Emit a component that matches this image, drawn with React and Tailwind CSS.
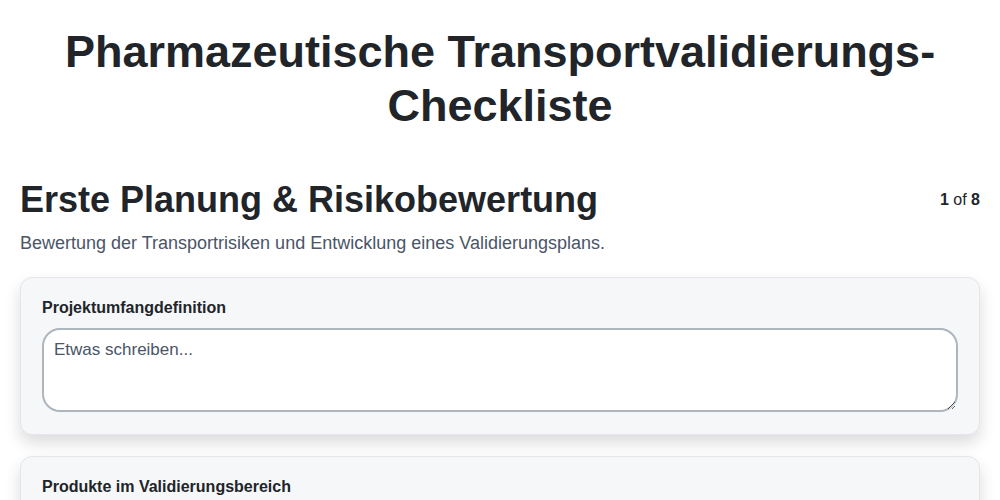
const FIELDS = [
  { label: 'Projektumfangdefinition' },
  { label: 'Produkte im Validierungsbereich' },
];

export default function App() {
  return (
    <div className="min-h-screen bg-white px-5 text-[#212529]" style={{ fontFamily: "'Liberation Sans', Arial, sans-serif" }}>
      <h1 className="mx-auto max-w-[900px] pt-[25px] text-center text-[45px] font-bold leading-[54px]">
        Pharmazeutische Transportvalidierungs-Checkliste
      </h1>

      <div className="mt-[45px] flex items-start justify-between">
        <h2 className="text-[36px] font-bold leading-[44px]">Erste Planung &amp; Risikobewertung</h2>
        <p className="mt-[10px] text-[16px]">
          <span className="font-bold">1</span> of <span className="font-bold">8</span>
        </p>
      </div>
      <p className="mt-[9px] text-[18px] leading-[24px] text-[#4a5568]">
        Bewertung der Transportrisiken und Entwicklung eines Validierungsplans.
      </p>

      <div className="mt-[22px] flex flex-col gap-[21px]">
        {FIELDS.map((f) => (
          <div
            key={f.label}
            className="rounded-xl border border-[#e4e6eb] bg-[#f6f7f9] px-[21px] pt-[19px] pb-[22px] shadow-[0_8px_16px_rgba(0,0,0,0.14)]"
          >
            <label className="block text-[16px] font-bold leading-[22px]">{f.label}</label>
            <textarea
              rows={3}
              placeholder="Etwas schreiben..."
              className="mt-[9px] block h-[84px] w-full rounded-[18px] border-2 border-[#adb5bd] bg-white px-[10px] py-[9px] text-[17px] leading-[22px] placeholder:text-[#4a5568]"
            />
          </div>
        ))}
      </div>
    </div>
  );
}
